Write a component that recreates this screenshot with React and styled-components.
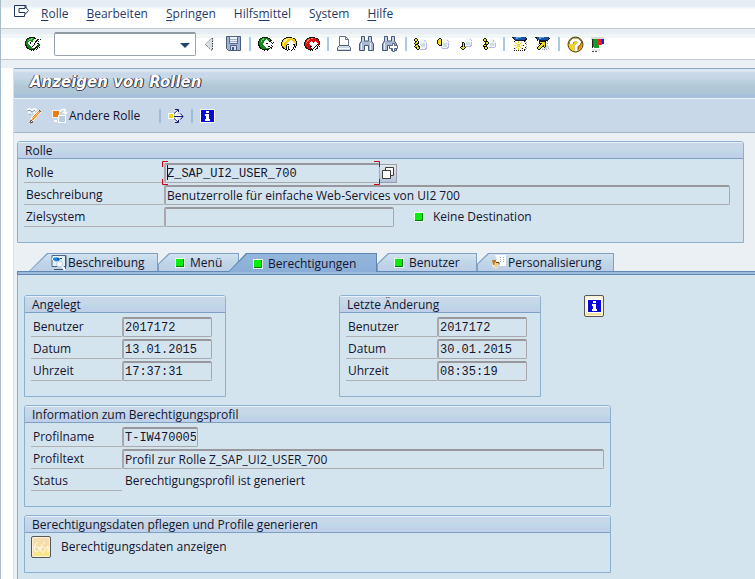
import React from "react";
import styled, { createGlobalStyle } from "styled-components";

const GlobalStyle = createGlobalStyle`
  * { box-sizing: border-box; }
  body {
    margin: 0;
    background: #eaf0f4;
    color: #14142e;
    font: 12px/16px "Open Sans", "Noto Sans", sans-serif;
  }
  button, input { font: inherit; color: inherit; margin: 0; }
  svg { display: block; flex: none; }
`;

const Window = styled.div`
  min-height: 100vh;
  display: flex;
  flex-direction: column;
  border-left: 1px solid #a9bccb;
`;

const MenuBar = styled.nav`
  display: flex;
  align-items: flex-start;
  height: 29px;
  padding: 5px 13px 0;
  gap: 11px;
  background: linear-gradient(#e6eef4 0 6px, #f3f7f9 8px, #fff 10px);
  border-bottom: 1px solid #c3c9d0;
`;

const MenuList = styled.div`
  display: flex;
  gap: 18px;
`;

const MenuItem = styled.button`
  border: 0;
  padding: 0;
  background: none;
  color: #1f3a68;
  line-height: 18px;
  u { text-underline-offset: 2px; }
`;

const ToolBar = styled.div`
  display: flex;
  align-items: center;
  height: 31px;
  padding: 0 24px;
  background: linear-gradient(#e8eef4 0 5px, #f1f6f7 5px 9px, #fff 9px);
  border-bottom: 1px solid #c3c9d0;
`;

const ToolGroup = styled.div`
  display: flex;
  align-items: center;
  gap: ${(p) => p.$gap || 7}px;
`;

const IconButton = styled.button`
  display: flex;
  align-items: center;
  gap: 1px;
  padding: 0;
  border: 0;
  background: none;
`;

const CommandField = styled.div`
  display: flex;
  width: 142px;
  height: 24px;
  margin: 0 8px 0 13px;
  border: 1px solid #98a4b0;
  border-top: 2px solid #8f9aa5;
  border-radius: 2px;
  background: #fff;
  input {
    flex: 1;
    min-width: 0;
    border: 0;
    padding: 0 4px;
    background: none;
    outline: none;
  }
  button {
    width: 20px;
    justify-content: center;
  }
`;

const Divider = styled.span`
  width: 2px;
  height: 14px;
  margin: 0 7px;
  background: ${(p) => (p.$dim ? "#9fbdd8" : "#a9c9e4")};
`;

const Workspace = styled.main`
  flex: 1;
  display: flex;
  flex-direction: column;
  margin-top: 8px;
  border-left: 12px solid #fff;
`;

const Screen = styled.div`
  flex: 1;
  display: flex;
  flex-direction: column;
  border-left: 1px solid #d6e2ec;
`;

const Title = styled.h1`
  margin: 0;
  height: 31px;
  padding: 0 16px;
  border-top: 1px solid #86a4c4;
  border-bottom: 1px solid #eaf2fa;
  background: linear-gradient(#dce8f2 0 2px, #c8d8e8 4px 8px, #b8d0dc 13px, #b2c6d6 18px, #aec6d6 24px, #a6bfda 26px);
  color: #fff;
  font: italic 700 15px/27px "DejaVu Sans", "Noto Sans", sans-serif;
  text-shadow: 1px 0 #1a1d33, 0 1px #4a4d60, -1px 0 #5d6478;
`;

const AppBar = styled.div`
  display: flex;
  align-items: center;
  height: 34px;
  padding: 0 12px;
  background: #c8d8e8;
  border-bottom: 1px solid #9db3c6;
`;

const Group = styled.section`
  border: 1px solid #8cb0d0;
  border-radius: 3px 3px 0 0;
  background: #d4e4ee;
  width: ${(p) => (p.$width ? p.$width + "px" : "auto")};
  max-width: 100%;
`;

const GroupTitle = styled.h2`
  margin: 0;
  height: 17px;
  padding: 0 7px;
  font: inherit;
  line-height: 15px;
  border-top: 1px solid #e8f2fa;
  border-bottom: 1px solid #7c9fc4;
  border-radius: 2px 2px 0 0;
  background: linear-gradient(#c8d8e8 0 5px, #c0d8e8 8px, #c0d0e8 12px);
`;

const Rows = styled.div`
  display: flex;
  flex-direction: column;
  gap: 2px;
  padding: 4px ${(p) => p.$right || 6}px 15px 6px;
`;

const Row = styled.div`
  display: flex;
  align-items: center;
  height: 20px;
`;

const Label = styled.label`
  flex: none;
  align-self: stretch;
  width: ${(p) => p.$width || 91}px;
  padding-left: 2px;
  line-height: 20px;
  border-bottom: 1px solid #b0b0b4;
`;

const Field = styled.input`
  width: ${(p) => (p.$width ? p.$width + "px" : "auto")};
  flex: ${(p) => (p.$width ? "none" : "1")};
  min-width: 0;
  height: 20px;
  padding: 0 1px;
  border: 1px solid #a8a8ac;
  border-top: 2px solid #98989c;
  border-left-width: 2px;
  border-radius: 2px;
  background: #d4e4ee;
  outline: none;
  font-family: ${(p) => (p.$mono ? '"Liberation Mono", monospace' : "inherit")};
`;

const Output = styled.span`
  padding-left: 3px;
`;

const FocusFrame = styled.span`
  position: relative;
  display: flex;
  svg {
    position: absolute;
    left: -2px;
    top: -2px;
    width: calc(100% + 2px);
    height: 24px;
    pointer-events: none;
  }
`;

const HelpButton = styled.button`
  width: 17px;
  height: 19px;
  padding: 0;
  display: grid;
  place-items: center;
  border: 1px solid #9a9ca6;
  border-left: 0;
  background: linear-gradient(#e2eaf2, #b2c4dc);
`;

const Destination = styled.span`
  display: flex;
  align-items: center;
  gap: 9px;
  margin-left: 20px;
`;

const Main = styled.div`
  display: flex;
  flex-direction: column;
  flex: 1;
  padding: 8px 0 0 3px;
`;

const RoleArea = styled.div`
  margin-right: 11px;
`;

const TabList = styled.div`
  display: flex;
  margin: 10px 0 0 12px;
`;

const slope = (n) => `polygon(0 100%, 0 ${n === 18 ? 100 : 60}%, ${n}px 0, 100% 0, 100% 100%)`;

const Tab = styled.button`
  position: relative;
  z-index: ${(p) => (p.$active ? 1 : 0)};
  isolation: isolate;
  display: flex;
  align-items: center;
  flex: none;
  gap: ${(p) => p.$gap || 5}px;
  width: ${(p) => p.$width}px;
  height: ${(p) => (p.$active ? 19 : 18)}px;
  margin: 0 0 ${(p) => (p.$active ? -1 : 0)}px ${(p) => (p.$active ? -11 : 0)}px;
  padding: 2px 0 0 ${(p) => p.$pad}px;
  border: 0;
  white-space: nowrap;
  background: ${(p) => (p.$active ? "#5f86b0" : "#7f9fc4")};
  clip-path: ${(p) => slope(p.$slope)};
  &::before {
    content: "";
    position: absolute;
    z-index: -1;
    inset: 1px 1px 0 1px;
    clip-path: ${(p) => slope(p.$slope)};
    background: ${(p) => (p.$active ? "linear-gradient(#94b6dc, #8aaed8)" : "linear-gradient(#d2e2f0, #c0d6e8 8px, #bccee6)")};
  }
`;

const TabPanel = styled.div`
  flex: 1;
  display: flex;
  flex-direction: column;
  align-items: flex-start;
  gap: 8px;
  padding: 20px 6px 6px;
  border-left: 1px solid #8cb0d0;
  background: #d4e4ee;
`;

const TabRule = styled.div`
  height: 4px;
  border: 1px solid #5f88b4;
  border-right: 0;
  background: #9dbbdc;
`;

const HistoryRow = styled.div`
  display: flex;
  align-items: flex-start;
`;

const Spacer = styled.span`
  width: ${(p) => p.$width}px;
`;

const YellowButton = styled.button`
  width: 20px;
  height: 22px;
  display: grid;
  place-items: center;
  padding: 0;
  border: 1px solid #55575c;
  border-radius: 2px;
  background: ${(p) => (p.$strong ? "linear-gradient(#f6dcb8, #f6dc98 60%, #f8ea80)" : "linear-gradient(#f6f6f0, #fdf6dc 60%, #f2dc88)")};
  box-shadow: inset 0 0 0 1px #fdf3cf;
`;

const ActionRow = styled.div`
  display: flex;
  align-items: center;
  gap: 10px;
  padding: 3px 6px 14px;
`;

const Svg = ({ w = 16, h = 16, children, ...rest }) => (
  <svg width={w} height={h} viewBox={`0 0 ${w} ${h}`} aria-hidden="true" {...rest}>
    {children}
  </svg>
);

const INK = {
  k: "#14180f", y: "#ecdc20", w: "#ffffff", g: "#168a1c", l: "#68d85c",
  o: "#f5c814", p: "#fff08a", r: "#d81010", s: "#ff8478", b: "#1a52a4",
  c: "#5ea6e4", n: "#101a36", v: "#b8b4e8", f: "#f2f4fc", e: "#cde0ea", a: "#a0a4a8",
};

const Pixels = ({ rows }) => (
  <Svg w={Math.max(...rows.map((r) => r.length))} h={rows.length} shapeRendering="crispEdges">
    {rows.flatMap((row, y) =>
      [...row].map((ch, x) =>
        INK[ch] ? <rect key={x + "-" + y} x={x} y={y} width="1" height="1" fill={INK[ch]} /> : null
      )
    )}
  </Svg>
);

const ICONS = {
  enter: [
    "    kkkkkk      ",
    "  kkggllgkkw    ",
    " kgglllggwwwkk k",
    " kglggggwwwkk   ",
    "kgggwwggwwkk k  ",
    "kggwwkwwwwk     ",
    "kggwwkwwwk  kk  ",
    "kgggwwwwwk wwgk ",
    "kkgggwwwk wwkgk ",
    " kggggwkwwwkgk  ",
    " kkggggwwwkkk k ",
    "  kkgggggkk k   ",
    "    kkkkkk k    ",
    "      k k       ",
  ],
  back: [
    "    kkkkkk      ",
    "  kkglggggkk    ",
    " kggllggwgggk   ",
    " kglgggwwwggkk  ",
    "kgglggwwwwwkk   ",
    "kgggggwwwwwwwk k",
    "kggggwwwkkwww k ",
    "kggggwwwwwwwww  ",
    "kkggggwwwwww k  ",
    " kgggggwwwkkwwk ",
    " kkgggggwwwwkk  ",
    "  kkgggggggk k  ",
    "    kkkkkkk     ",
    "      k  k      ",
  ],
  exit: [
    "     kkkkkk     ",
    "   kkooppooykk  ",
    "  kopppoooooook ",
    " kopppooowwoook ",
    " kyppooowwwwooyk",
    "kyppooowwwwwwook",
    "kopooowwwwwwwwok",
    "kopoookkwwwwkkok",
    "kopook  wwww kok",
    " koook kwwww kk ",
    " kkook kwwwwk k ",
    "  kkok kwwwwk   ",
    "    kk kkwwk k  ",
    "      k   k     ",
  ],
  cancel: [
    "     kkkkkk     ",
    "   kkrrssrrrkk  ",
    "  krssrrrrrrrrk ",
    " krssrrrrrrrrrk ",
    " krsrrrwrrrwrrrk",
    "krsrrrwwwrwwwrrk",
    "krrrrwwwwwwwwwrk",
    "krrrrrwwwwwwwkrk",
    "krrrrrrwwwwwk k ",
    " krrrrkkwwwk k k",
    " kkrrrk  wk  k  ",
    "  kkrrrk k  kk  ",
    "    kkkkk  k    ",
    "      k k       ",
  ],
  first: [
    " kk          ",
    "kyyk  fffff  ",
    "kyyk  ffffvf ",
    " kk k fffffvf",
    " kyyk fffffff",
    "kyykkffeeeefv",
    " kkkffeeeeefv",
    " kyyk feeeefv",
    "kyyykkfeeeefv",
    " kkyykffffffv",
    "  kyyk ffffvv",
    "   kk vvvvvv ",
  ],
  prev: [
    "  kk         ",
    " kyyk fffff  ",
    "kyyyk ffffvf ",
    "kyyyk fffffvf",
    "kyyykfffffff ",
    "kyyykfeeeefv ",
    " kyykfeeeefv ",
    "  kkkfeeeefv ",
    "    ffeeeefv ",
    "    vfffffvv ",
    "     vvvvvv  ",
    "             ",
  ],
  next: [
    "      fffff  ",
    "     fffffvf ",
    "     ffffffvf",
    "     fffffff ",
    "  kk feeeefv ",
    "  kykfeeeefv ",
    "  kykfeeeefv ",
    "  kykfffffvv ",
    " kkykvvvvvv  ",
    "kyyyyk       ",
    " kyyk        ",
    "  kk         ",
  ],
  last: [
    " kk          ",
    "kyyk  fffff  ",
    "kyyk  ffffvf ",
    " kkkkfffffvff",
    "  kyykfffffff",
    "  kyykfeeeefv",
    " kkkk feeeefv",
    "kyyk  feeeefv",
    "kkkk  ffffffv",
    " kyyk vvvvvv ",
    " kyyk        ",
    "  kk         ",
  ],
  session: [
    "kkbbcccccbbbbk  ",
    " nbbccbbbbbbbbk ",
    "  nbbbbbbbbbbnk ",
    "  wnnnnnnnnnnn  ",
    "  kwwwywwwwwka  ",
    "  wywwywwywww a ",
    "  wwywwwywwwwk  ",
    "  wwwyyywwwww a ",
    "  yywyyywyykw   ",
    "  wwwyyywwwww a ",
    "  wwywwwywwwwk  ",
    "  kywwywwykww a ",
    "  wwwwywwwwwka  ",
    "  k kwkwkwk k   ",
  ],
  shortcut: [
    "kkbbcccccbbbbk  ",
    " nbbccbbbbbbbbk ",
    "  nbbbbbbbbbbn  ",
    "  kwnnnnnnnnn   ",
    "    kkkkkkk a   ",
    "    kyyyyyk     ",
    "    kkkyyyk a   ",
    "   a kyyyyk     ",
    "    kyyykykee   ",
    "   kyyykkykeee  ",
    "  kyyyk  keeee  ",
    "  kyyk eeeee a  ",
    "   kk  a a a    ",
    "                ",
  ],
};

const WindowIcon = () => (
  <Svg w={16} h={13} fill="none" stroke="#1f3557">
    <path d="M12 3V.5H.5v11H10.500V9.500M5 3.500h6v-2l3.500 4L11 9.500v-2H5z" />
  </Svg>
);
const PrevIcon = () => (
  <Svg w={10} h={14}>
    <path d="M8.500 1v12L2 7z" fill="#d9dde2" />
    <path d="M8 1L1.500 7" stroke="#a5adb5" />
    <path d="M1.500 7.500l6.500 6M8.500 1v12" stroke="#3b4046" strokeDasharray="1.500 1" />
  </Svg>
);
const SaveIcon = () => (
  <Svg>
    <path d="M.5 .5h14v14H2.500l-2-2z" fill="#9fb4d0" stroke="#4b5d7d" />
    <path d="M3.500 .5h8V7.500h-8z" fill="#eef3f9" stroke="#56698a" />
    <path d="M4 3.500h7M4 5.500h7" stroke="#9fb1ca" />
    <path d="M4.500 9.500h6v5h-6z" fill="#d5deea" stroke="#4b5d7d" />
    <path d="M6 11h2v3H6z" fill="#4b5d7d" />
  </Svg>
);
const PrintIcon = () => (
  <Svg>
    <path d="M3.500 10.500V.5h6l3 3v7" fill="#fff" stroke="#63718a" />
    <path d="M9.500 .5v3h3" fill="none" stroke="#63718a" />
    <path d="M3.500 9.500L1.500 11.500v3h13v-3L12.500 9.500z" fill="#cdd7e5" stroke="#4f5d77" />
    <path d="M2 12.500h12" stroke="#fff" />
  </Svg>
);
const Binoculars = ({ plus }) => (
  <Svg>
    <path d="M2.500 .5h3V5h4V.5h3V5l2 3v6.500h-5V9.500h-4v5h-5V8l2-3z" fill="#a9bad2" stroke="#465874" />
    <path d="M2.500 7v7M11.500 7v7M4 1v4M11 1v4" stroke="#e8eff8" />
    {plus && <path d="M10.500 7.500h2v2h3v3h-3v3h-2v-3h-3v-3h3z" fill="#fff" stroke="#55657f" />}
  </Svg>
);
const HelpIcon = () => (
  <Svg w={17} h={17}>
    <circle cx="8.500" cy="8.500" r="7.500" fill="#f6d21c" stroke="#4a3908" />
    <path d="M13 4a6 6 0 0 1-1 10l-2-3 3-3z" fill="#f08a18" />
    <path d="M4.500 8V6l2-2.500h4L13 6l-1 2-2.500 2v4.500" fill="none" stroke="#6b5410" strokeWidth="4" />
    <path d="M4.500 8V6l2-2h4L12.500 6l-1 2L9 10v5" fill="none" stroke="#fff" strokeWidth="3" />
  </Svg>
);
const LayoutIcon = () => (
  <Svg w={14} h={15}>
    <path d="M0 0h13v3H0z" fill="#dcdcdc" />
    <path d="M1 2h4v8H1z" fill="#e02020" />
    <path d="M3 2h5v9H3z" fill="#169c28" />
    <path d="M7 2h4v6H7z" fill="#ee2020" />
    <path d="M10 2h3v5h-2z" fill="#1926d6" />
    <path d="M1.500 2v9" stroke="#222" />
    <path d="M1 13h8" stroke="#ccc" />
    <path d="M1 14.500h6" stroke="#555" strokeDasharray="2 1" />
  </Svg>
);
const PencilIcon = () => (
  <Svg>
    <path d="M1 2l3-1 2 2 2-2 3 1M2 3l3 4M7 3l2 3" fill="none" stroke="#fff" strokeWidth="2" />
    <path d="M1 3l3-1 2 2 3-2M3 6l2 1" fill="none" stroke="#8797aa" />
    <path d="M4 14l2-5 7-7 2 2-7 8z" fill="#f08a20" stroke="#fff" />
    <path d="M5 12l8-8" stroke="#ffd27a" />
    <path d="M13 2l2 2M4 15l1-3 2 2z" stroke="#5c5148" fill="#fff" />
  </Svg>
);
const OtherIcon = () => (
  <Svg>
    <path d="M0 2h8v8H0z" fill="#f6f2ea" />
    <path d="M1 3h6v6H1z" fill="#ec7d10" />
    <path d="M6 7h8v8H6z" fill="#fff" />
    <path d="M7 8h6v6H7z" fill="#b7cfdf" />
    <path d="M8 3.500l2-2h3v3M11 4l2.500 2L15 4" fill="none" stroke="#fff" strokeWidth="1.500" />
    <path d="M2 12h3v2H2z" fill="#fff" />
  </Svg>
);
const ExpandIcon = () => (
  <Svg>
    <path d="M0 5h6v6H0z" fill="#fff" />
    <path d="M1 6h4v4H1z" fill="#e6dc1a" />
    <path d="M7 5.500l3-3.500M7 8h7M7 10.500l3 3.500" stroke="#fff" strokeWidth="3" />
    <path d="M6 5.500L10 2M6 8.500h9M6 10.500l4 3.500M7 1.500h3.500V4M12.500 5.500l2.500 3-2.500 3M7 14.500h3.500V12" fill="none" stroke="#14147e" />
  </Svg>
);
const InfoIcon = () => (
  <Svg w={15} h={14}>
    <path d="M0 0h15v14H0z" fill="#fff" />
    <path d="M1 1h13v12H1z" fill="#0808d8" />
    <path d="M6 2h3v2H6zM5 5h4v5h1v2H5v-2h1V7H5z" fill="#fff" />
  </Svg>
);
const Lamp = () => (
  <Svg w={10} h={10}>
    <path d="M0 0h10v10H0z" fill="#eaffea" />
    <path d="M1 1h8v8H1z" fill="#087a12" />
    <path d="M1 1h7v7H1z" fill="#08ee08" />
  </Svg>
);
const CopyIcon = () => (
  <Svg w={12} h={12} fill="#fff" stroke="#3c3c30">
    <path d="M3.500 .5h8v8h-8z" />
    <path d="M.5 3.500h8v8h-8z" />
  </Svg>
);
const PreviewIcon = () => (
  <Svg>
    <path d="M1 .5h14v11H1z" fill="#e6eef6" stroke="#4e6480" />
    <path d="M14.500 1v13M3 14.500h9" stroke="#3f5673" />
    <path d="M1 4c2-3 6-3 9 0-2 4-6 4-9 0z" fill="#168ce4" stroke="#fff" />
    <path d="M6 3h2v2H6zM9 3h2v1H9z" fill="#08508c" />
    <circle cx="8.500" cy="9" r="3" fill="#fff" stroke="#b5cbe0" />
    <path d="M11 11l3 4" stroke="#fff" strokeWidth="2" />
  </Svg>
);
const PersonIcon = () => (
  <Svg>
    <path d="M4 0h11v11H9z" fill="#fbfdff" />
    <path d="M9.500 2v5M12.500 2v5" stroke="#a0a8b4" strokeDasharray="1 1" />
    <path d="M1 5h7v5l-3 4-4-3z" fill="#f7eed6" />
    <path d="M1 5h4v5H2z" fill="#b87a24" />
    <path d="M4 7h3v4l-2 2-2-2z" fill="#f0cf86" />
    <path d="M5 7.500h3v2" fill="none" stroke="#5a4520" />
  </Svg>
);
const GlassesIcon = () => (
  <Svg fill="none" stroke="#fff">
    <path d="M5 3C2 5 0 9 2 12c2 2 5 0 4-3-1-2-3-1-4 0M12 3C9 4 7 9 8 12c2 3 5 0 4-3-1-2-3-1-4 1M6 9h2M13 9l2-2v6" />
  </Svg>
);

const MENUS = [
  ["", "R", "olle"],
  ["", "B", "earbeiten"],
  ["", "S", "pringen"],
  ["Hilfs", "m", "ittel"],
  ["S", "y", "stem"],
  ["", "H", "ilfe"],
];

const History = ({ id, title, values }) => (
  <Group $width={202}>
    <GroupTitle>{title}</GroupTitle>
    <Rows>
      {["Benutzer", "Datum", "Uhrzeit"].map((name, i) => (
        <Row key={name}>
          <Label htmlFor={id + i}>{name}</Label>
          <Field id={id + i} $width={90} $mono readOnly defaultValue={values[i]} />
        </Row>
      ))}
    </Rows>
  </Group>
);

const Tool = ({ label, children }) => (
  <IconButton type="button" aria-label={label}>{children}</IconButton>
);

export default function App() {
  return (
    <Window>
      <GlobalStyle />
      <MenuBar>
        <Tool label="Fenstermenü"><WindowIcon /></Tool>
        <MenuList>
          {MENUS.map(([a, key, b]) => (
            <MenuItem key={a + key + b} type="button">{a}<u>{key}</u>{b}</MenuItem>
          ))}
        </MenuList>
      </MenuBar>
      <ToolBar>
        <Tool label="Enter"><Pixels rows={ICONS.enter} /></Tool>
        <CommandField>
          <input aria-label="Transaktion" />
          <IconButton type="button" aria-label="Liste öffnen">
            <Svg w={10} h={6}><path d="M0 1h10L5 6z" fill="#24446e" /></Svg>
          </IconButton>
        </CommandField>
        <ToolGroup $gap={12}>
          <Tool label="Zurückblättern"><PrevIcon /></Tool>
          <Tool label="Sichern"><SaveIcon /></Tool>
        </ToolGroup>
        <Divider />
        <ToolGroup>
          <Tool label="Zurück"><Pixels rows={ICONS.back} /></Tool>
          <Tool label="Beenden"><Pixels rows={ICONS.exit} /></Tool>
          <Tool label="Abbrechen"><Pixels rows={ICONS.cancel} /></Tool>
        </ToolGroup>
        <Divider />
        <ToolGroup>
          <Tool label="Drucken"><PrintIcon /></Tool>
          <Tool label="Suchen"><Binoculars /></Tool>
          <Tool label="Weiter suchen"><Binoculars plus /></Tool>
        </ToolGroup>
        <Divider />
        <ToolGroup $gap={10}>
          <Tool label="Erste Seite"><Pixels rows={ICONS.first} /></Tool>
          <Tool label="Vorige Seite"><Pixels rows={ICONS.prev} /></Tool>
          <Tool label="Nächste Seite"><Pixels rows={ICONS.next} /></Tool>
          <Tool label="Letzte Seite"><Pixels rows={ICONS.last} /></Tool>
        </ToolGroup>
        <Divider />
        <ToolGroup>
          <Tool label="Neuer Modus"><Pixels rows={ICONS.session} /></Tool>
          <Tool label="Verknüpfung"><Pixels rows={ICONS.shortcut} /></Tool>
        </ToolGroup>
        <Divider />
        <ToolGroup>
          <Tool label="Hilfe"><HelpIcon /></Tool>
          <Tool label="Layout anpassen"><LayoutIcon /></Tool>
        </ToolGroup>
      </ToolBar>

      <Workspace>
        <Screen>
          <Title>Anzeigen von Rollen</Title>
          <AppBar>
            <ToolGroup $gap={10}>
              <Tool label="Ändern"><PencilIcon /></Tool>
              <IconButton type="button"><OtherIcon />Andere Rolle</IconButton>
            </ToolGroup>
            <Spacer $width={12} />
            <Divider $dim />
            <Tool label="Aufreißen"><ExpandIcon /></Tool>
            <Divider $dim />
            <Tool label="Information"><InfoIcon /></Tool>
          </AppBar>

          <Main>
            <RoleArea>
              <Group>
                <GroupTitle>Rolle</GroupTitle>
                <Rows $right={13}>
                  <Row>
                    <Label $width={140} htmlFor="rolle">Rolle</Label>
                    <FocusFrame>
                      <Field id="rolle" $width={216} $mono readOnly defaultValue="Z_SAP_UI2_USER_700" />
                      <svg viewBox="0 0 218 24" fill="none" stroke="#c80010" aria-hidden="true">
                        <path d="M6 .5H.5V6M.5 18v5.500H6M212 .5h5.500V6M217.500 18v5.500H212" />
                        <path d="M5.500 4v15" stroke="#111" />
                      </svg>
                    </FocusFrame>
                    <HelpButton type="button" aria-label="Wertehilfe"><CopyIcon /></HelpButton>
                  </Row>
                  <Row>
                    <Label $width={140} htmlFor="beschreibung">Beschreibung</Label>
                    <Field id="beschreibung" readOnly defaultValue="Benutzerrolle für einfache Web-Services von UI2 700" />
                  </Row>
                  <Row>
                    <Label $width={140} htmlFor="ziel">Zielsystem</Label>
                    <Field id="ziel" $width={230} readOnly />
                    <Destination><Lamp />Keine Destination</Destination>
                  </Row>
                </Rows>
              </Group>
            </RoleArea>

            <TabList role="tablist">
              <Tab role="tab" $slope={18} $width={129} $pad={22} $gap={1}><PreviewIcon />Beschreibung</Tab>
              <Tab role="tab" $slope={11} $width={81} $pad={17}><Lamp />Menü</Tab>
              <Tab role="tab" aria-selected="true" $active $slope={18} $width={149} $pad={25}><Lamp />Berechtigungen</Tab>
              <Tab role="tab" $slope={11} $width={100} $pad={17}><Lamp />Benutzer</Tab>
              <Tab role="tab" $slope={11} $width={137} $pad={14} $gap={1}><PersonIcon />Personalisierung</Tab>
            </TabList>
            <TabRule />
            <TabPanel role="tabpanel">
              <HistoryRow>
                <History id="angelegt" title="Angelegt" values={["2017172", "13.01.2015", "17:37:31"]} />
                <Spacer $width={113} />
                <History id="geaendert" title="Letzte Änderung" values={["2017172", "30.01.2015", "08:35:19"]} />
                <Spacer $width={43} />
                <YellowButton type="button" aria-label="Information"><InfoIcon /></YellowButton>
              </HistoryRow>
              <Group $width={587}>
                <GroupTitle>Information zum Berechtigungsprofil</GroupTitle>
                <Rows>
                  <Row>
                    <Label htmlFor="profil">Profilname</Label>
                    <Field id="profil" $width={76} $mono readOnly defaultValue="T-IW470005" />
                  </Row>
                  <Row>
                    <Label htmlFor="text">Profiltext</Label>
                    <Field id="text" readOnly defaultValue="Profil zur Rolle Z_SAP_UI2_USER_700" />
                  </Row>
                  <Row>
                    <Label as="span">Status</Label>
                    <Output>Berechtigungsprofil ist generiert</Output>
                  </Row>
                </Rows>
              </Group>
              <Group $width={587}>
                <GroupTitle>Berechtigungsdaten pflegen und Profile generieren</GroupTitle>
                <ActionRow>
                  <YellowButton $strong type="button" id="anzeigen" aria-labelledby="anzeigen-text"><GlassesIcon /></YellowButton>
                  <label id="anzeigen-text" htmlFor="anzeigen">Berechtigungsdaten anzeigen</label>
                </ActionRow>
              </Group>
            </TabPanel>
          </Main>
        </Screen>
      </Workspace>
    </Window>
  );
}
